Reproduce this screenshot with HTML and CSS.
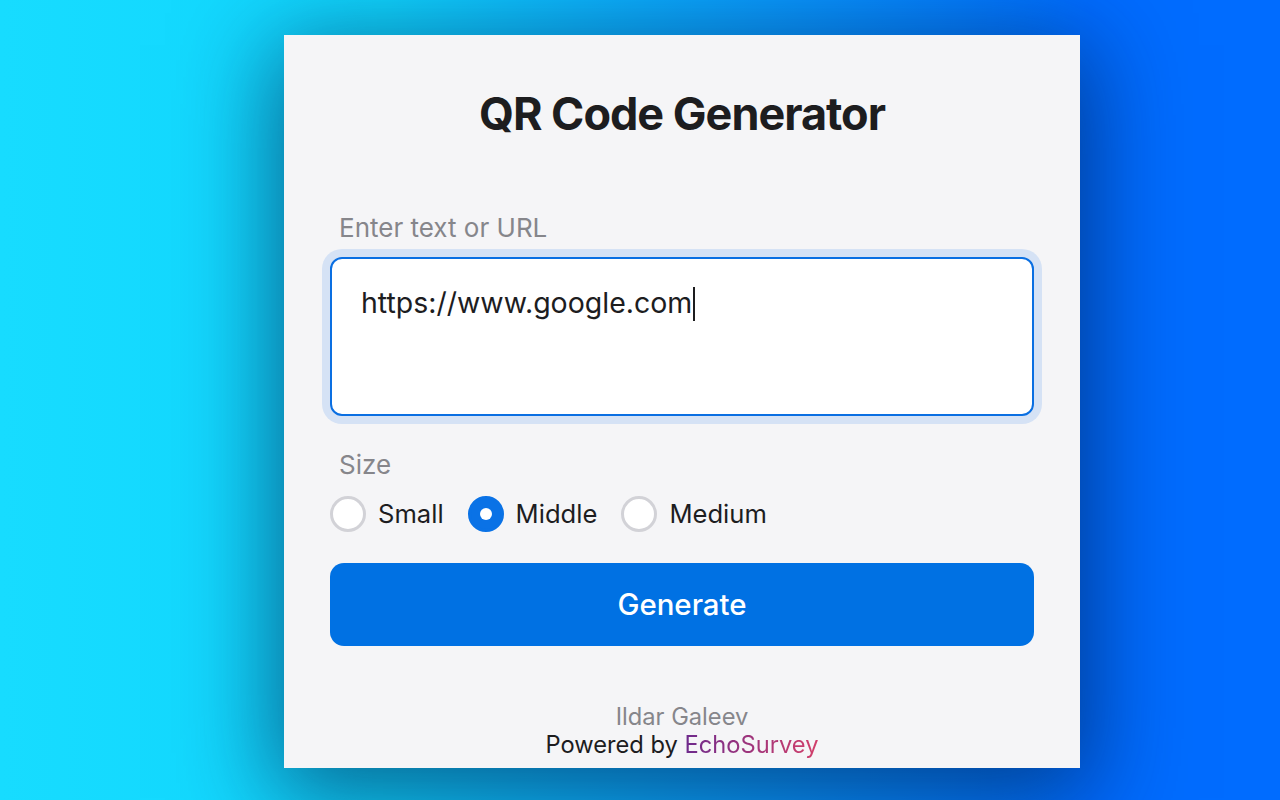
FILE: index.html
```html
<!DOCTYPE html>
<html>
<head>
<meta charset="utf-8">
<link rel="stylesheet" href="styles.css">
</head>
<body>
<div class="card">
  <h1 class="title">QR Code Generator</h1>
  <div class="label">Enter text or URL</div>
  <div class="input-wrap">
    <div class="textarea">https://www.google.com<span class="caret"></span></div>
  </div>
  <div class="label size-label">Size</div>
  <div class="radios">
    <div class="radio"><span class="dot"></span><span class="rlabel">Small</span></div>
    <div class="radio"><span class="dot on"></span><span class="rlabel">Middle</span></div>
    <div class="radio"><span class="dot"></span><span class="rlabel">Medium</span></div>
  </div>
  <div class="button">Generate</div>
  <div class="footer">
    <div class="author">Ildar Galeev</div>
    <div class="powered">Powered by <span class="brand">EchoSurvey</span></div>
  </div>
</div>
</body>
</html>
```
FILE: styles.css
```css
html, body {
  margin: 0;
  padding: 0;
  height: 800px;
  overflow: hidden;
}
body {
  background: linear-gradient(90deg, #17dcff 0%, #10d6ff 30%, #0a9cff 60%, #006cff 85%, #006cff 100%);
  font-family: Inter, "Noto Sans", sans-serif;
  padding-top: 35px;
  box-sizing: border-box;
}
.card {
  margin-left: 284px;
  width: 796px;
  box-sizing: border-box;
  background: #f5f5f7;
  padding: 51px 46px 9px 46px;
  box-shadow: 0 20px 90px 10px rgba(0, 25, 70, 0.6);
}
.title {
  margin: 0;
  text-align: center;
  font-size: 45px;
  line-height: 55px;
  font-weight: 700;
  letter-spacing: -1px;
  color: #1d1d1f;
}
.label {
  margin: 72px 0 0 9px;
  font-size: 26px;
  line-height: 30px;
  color: #86868b;
}
.input-wrap {
  margin-top: 6px;
  padding: 8px;
  margin-left: -8px;
  margin-right: -8px;
  background: #d5e2f5;
  border-radius: 20px;
}
.textarea {
  height: 159px;
  box-sizing: border-box;
  background: #fff;
  border: 2px solid #0a6fe2;
  border-radius: 12px;
  padding: 25px 29px;
  font-size: 28.5px;
  line-height: 38px;
  color: #1d1d1f;
}
.caret {
  display: inline-block;
  width: 2px;
  height: 34px;
  background: #1d1d1f;
  vertical-align: -8px;
  margin-left: 1px;
}
.size-label {
  margin-top: 26px;
}
.radios {
  margin-top: 16px;
  display: flex;
  gap: 24px;
}
.radio {
  display: flex;
  align-items: center;
  gap: 12px;
}
.dot {
  width: 36px;
  height: 36px;
  box-sizing: border-box;
  border: 3px solid #d2d2d7;
  border-radius: 50%;
  background: #fff;
  display: flex;
  align-items: center;
  justify-content: center;
}
.dot.on {
  background: #0a72e6;
  border-color: #0a72e6;
}
.dot.on::after {
  content: "";
  width: 12px;
  height: 12px;
  background: #fff;
  border-radius: 50%;
}
.rlabel {
  font-size: 25.6px;
  line-height: 36px;
  color: #1d1d1f;
}
.button {
  margin-top: 31px;
  height: 83px;
  border-radius: 14px;
  background: #0071e3;
  color: #fff;
  font-size: 29.4px;
  font-weight: 500;
  display: flex;
  align-items: center;
  justify-content: center;
}
.footer {
  margin-top: 57px;
  text-align: center;
  font-size: 23.7px;
  line-height: 28px;
}
.author {
  color: #86868b;
}
.powered {
  color: #1d1d1f;
}
.brand {
  background: linear-gradient(90deg, #6e2a8c, #d23f6a);
  -webkit-background-clip: text;
  background-clip: text;
  color: transparent;
}
```
